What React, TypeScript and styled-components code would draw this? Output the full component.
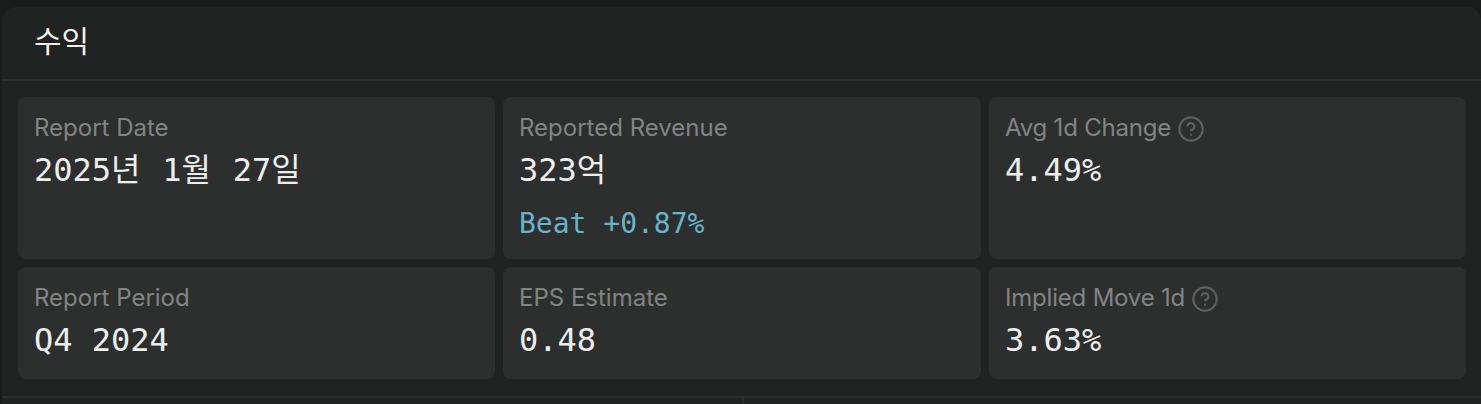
import { CircleHelp } from 'lucide-react';
import styled, { createGlobalStyle } from 'styled-components';

const GlobalStyle = createGlobalStyle`
  html, body {
    margin: 0;
    height: 100%;
    background: #1a1c1b;
    overflow: hidden;
  }

  body {
    font-family: Inter, "Noto Sans CJK KR", sans-serif;
  }
`;

const metrics = [
  { label: 'Report Date', value: '2025년 1월 27일', wide: true },
  { label: 'Reported Revenue', value: '323억', note: 'Beat +0.87%' },
  { label: 'Avg 1d Change', value: '4.49%', hint: true },
  { label: 'Report Period', value: 'Q4 2024' },
  { label: 'EPS Estimate', value: '0.48' },
  { label: 'Implied Move 1d', value: '3.63%', hint: true },
];

function App() {
  return (
    <Page>
      <GlobalStyle />
      <Panel>
        <PanelHeader>
          <PanelTitle>수익</PanelTitle>
        </PanelHeader>
        <MetricGrid>
          {metrics.map(metric => (
            <MetricCard key={metric.label}>
              <MetricLabel $tight={metric.hint}>
                {metric.label}
                {metric.hint && <HintIcon size={28} strokeWidth={1.8} />}
              </MetricLabel>
              <MetricValue $wide={metric.wide}>{metric.value}</MetricValue>
              {metric.note && <MetricNote>{metric.note}</MetricNote>}
            </MetricCard>
          ))}
        </MetricGrid>
        <PanelFooter>
          <FooterCell />
          <FooterCell />
        </PanelFooter>
      </Panel>
    </Page>
  );
}

export default App;

const Page = styled.div`
  width: 1481px;
  height: 404px;
  box-sizing: border-box;
  padding: 7px 0 0 2px;
  overflow: hidden;
`;

const Panel = styled.section`
  width: 1479px;
  height: 397px;
  background: #212322;
  border-radius: 14px 14px 0 0;
  overflow: hidden;
`;

const PanelHeader = styled.header`
  height: 64px;
  box-sizing: content-box;
  display: flex;
  align-items: center;
  padding: 0 0 8px 32px;
  border-bottom: 2px solid #2d2f2e;
`;

const PanelTitle = styled.h2`
  margin: 0;
  font-size: 30px;
  line-height: 36px;
  font-weight: 400;
  color: #f1f1f1;
  font-family: "Noto Sans CJK KR", sans-serif;
`;

const MetricGrid = styled.div`
  display: grid;
  grid-template-columns: 477px 478px 477px;
  grid-template-rows: 162px 112px;
  gap: 8px;
  padding: 16px 0 17px 16px;
`;

const MetricCard = styled.div`
  box-sizing: border-box;
  padding: 16px 16px 14px;
  background: #2d2f2e;
  border-radius: 8px;
`;

const MetricLabel = styled.div<{ $tight?: boolean }>`
  display: flex;
  align-items: center;
  gap: 6px;
  height: 30px;
  padding-bottom: 2px;
  font-size: 24px;
  line-height: 30px;
  letter-spacing: ${p => (p.$tight ? '-0.2px' : '0')};
  color: #828483;
`;

const HintIcon = styled(CircleHelp)`
  flex: none;
  margin-top: 2px;
  color: #5e605f;
`;

const MetricValue = styled.div<{ $wide?: boolean }>`
  font-family: "DejaVu Sans Mono", "Noto Sans CJK KR", monospace;
  font-size: 32px;
  line-height: 50px;
  word-spacing: ${p => (p.$wide ? '2.5px' : '0')};
  color: #eeeeee;
`;

const MetricNote = styled.div`
  margin-top: 10px;
  font-family: "DejaVu Sans Mono", monospace;
  font-size: 28px;
  line-height: 38px;
  color: #68b3cc;
`;

const PanelFooter = styled.div`
  display: grid;
  grid-template-columns: 740px 1fr;
  height: 8px;
  border-top: 2px solid #2d2f2e;
`;

const FooterCell = styled.div`
  & + & {
    border-left: 2px solid #2d2f2e;
  }
`;
